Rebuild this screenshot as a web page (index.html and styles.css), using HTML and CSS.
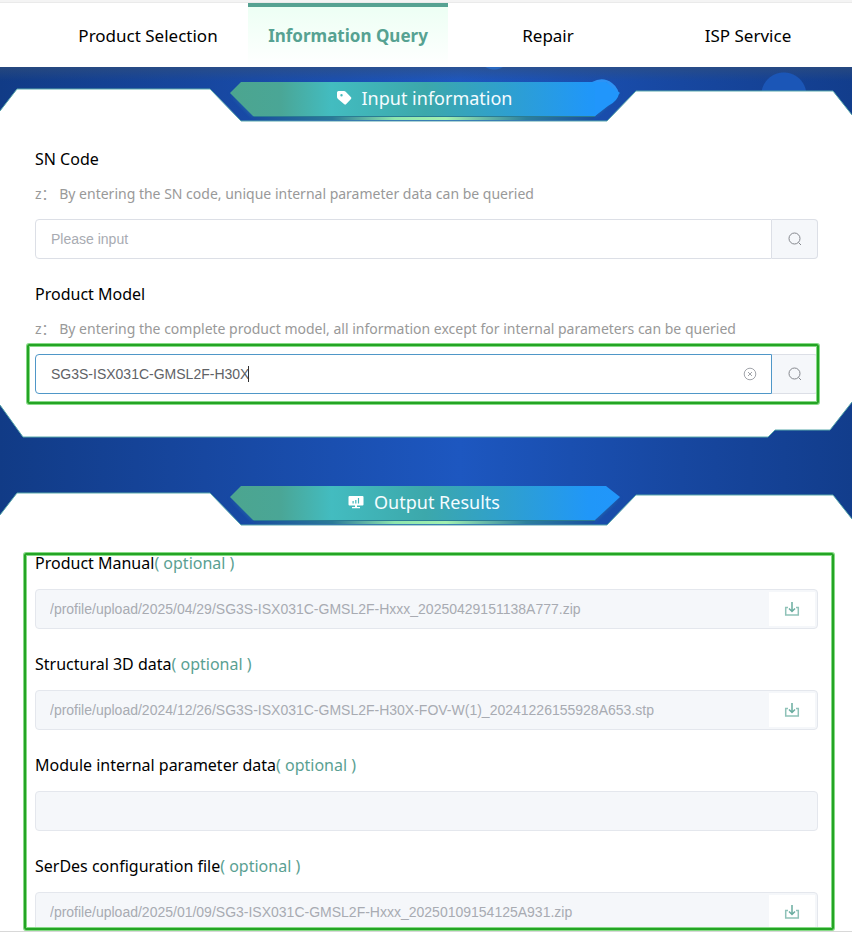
FILE: index.html
```
<!DOCTYPE html>
<html lang="en">
<head>
<meta charset="utf-8">
<meta name="viewport" content="width=device-width, initial-scale=1">
<title>Information Query</title>
<link rel="stylesheet" href="styles.css">
</head>
<body>
<div class="app">
  <nav class="tabs">
    <a class="tab" href="#">Product Selection</a>
    <a class="tab tab-active" href="#" aria-current="page">Information Query</a>
    <a class="tab" href="#">Repair</a>
    <a class="tab" href="#">ISP Service</a>
  </nav>

  <svg class="defs" aria-hidden="true">
    <defs>
      <linearGradient id="ribbon" x1="230" x2="620" y1="0" y2="0" gradientUnits="userSpaceOnUse">
        <stop offset="0" stop-color="#4ca58f"/>
        <stop offset="0.13" stop-color="#4aa696"/>
        <stop offset="0.26" stop-color="#43bcc0"/>
        <stop offset="0.5" stop-color="#3ca8ab"/>
        <stop offset="0.7" stop-color="#2fa0cd"/>
        <stop offset="0.92" stop-color="#2097f8"/>
        <stop offset="1" stop-color="#2196fb"/>
      </linearGradient>
      <linearGradient id="glow" x1="241" x2="607" y1="0" y2="0" gradientUnits="userSpaceOnUse">
        <stop offset="0" stop-color="#1747a0"/>
        <stop offset="0.25" stop-color="#2a7a98"/>
        <stop offset="0.42" stop-color="#8ee6ae"/>
        <stop offset="0.56" stop-color="#a2f0b0"/>
        <stop offset="0.78" stop-color="#2b7f9e"/>
        <stop offset="1" stop-color="#1747a0"/>
      </linearGradient>
      <filter id="soft" x="-5%" y="-20%" width="110%" height="150%"><feGaussianBlur stdDeviation="2"/></filter>
      <symbol id="cap" viewBox="0 0 852 40" preserveAspectRatio="none">
        <path fill="#fff" d="M0 29 17 7H210L241 39H607L636 9H833L852 33V40H0Z"/>
        <path fill="#2b83a8" opacity=".7" filter="url(#soft)" d="M230 11 253 34H595L620 11 607 18H241Z"/>
        <path fill="url(#glow)" d="M252 35H596L592 38H256Z"/>
        <path fill="none" stroke="#58a8ab" stroke-width="1" d="M0 29 17 7H210L241 39H607L636 9H833L852 33"/>
        <path fill="#2a7c93" d="M253 34H595V35H254Z"/>
        <path fill="url(#ribbon)" d="M230 11 241 0H606L620 11 595 34H253Z"/>
      </symbol>
      <symbol id="search" viewBox="0 0 14 14">
        <circle cx="6.500" cy="6.500" r="5.500" fill="none" stroke="#85888e"/>
        <path fill="none" stroke="#85888e" d="m10.500 10.500 2.500 2.500"/>
      </symbol>
      <symbol id="download" viewBox="0 0 16 16">
        <path fill="none" stroke="#8fc2b8" stroke-width="1.500" d="M4 6.500H1.700V14H14.300V6.500H12"/>
        <path fill="none" stroke="#6aada0" stroke-width="1.500" d="M8 1V10M5 7.500l3 3 3-3"/>
      </symbol>
    </defs>
  </svg>

  <main class="main">
    <section class="panel">
      <header class="cap">
        <svg class="cap-art" viewBox="0 0 852 40" preserveAspectRatio="none" aria-hidden="true">
          <use href="#cap" width="852" height="40"/>
          <path fill="#2d93f5" d="M592 0Q603-6 612 1Q620 7 618 15L606 0Z"/>
          <path fill="#2196fb" d="M595 0H606L619 11Q618 19 608 24L595 34Z"/>
        </svg>
        <h2 class="cap-title">
          <svg class="cap-icon" viewBox="0 0 16 16" aria-hidden="true"><path fill="#fff" fill-rule="evenodd" d="M2.500 1H8Q9 1 9.700 1.700L15 7.200Q15.800 8 15 8.900L10 14.300Q9.200 15 8.300 14.300L2 9Q1 8 1 7V2.500Q1 1 2.500 1ZM5.500 4A1.200 1.200 0 1 0 5.500 6.400 1.200 1.200 0 0 0 5.500 4Z"/></svg>
          Input information
        </h2>
      </header>
      <form class="panel-body">
        <div class="group">
          <label class="label" for="sn">SN Code</label>
          <p class="hint">z： By entering the SN code, unique internal parameter data can be queried</p>
          <div class="field">
            <input class="query" id="sn" type="text" placeholder="Please input">
            <button class="search" type="button" aria-label="Search"><svg class="icon-small"><use href="#search"/></svg></button>
          </div>
        </div>
        <div class="group">
          <label class="label" for="model">Product Model</label>
          <p class="hint">z： By entering the complete product model, all information except for internal parameters can be queried</p>
          <div class="field">
            <input class="query query-focus" id="model" type="text" value="SG3S-ISX031C-GMSL2F-H30X">
            <span class="caret"></span>
            <button class="clear" type="button" aria-label="Clear">
              <svg class="icon-small" viewBox="0 0 14 14"><g fill="none" stroke="#a2a5ab"><circle cx="7" cy="7" r="5.800"/><path d="m5 5 4 4m0-4-4 4"/></g></svg>
            </button>
            <button class="search" type="button" aria-label="Search"><svg class="icon-small"><use href="#search"/></svg></button>
            <span class="mark mark-field"></span>
          </div>
        </div>
      </form>
      <svg class="foot" viewBox="0 0 852 36" preserveAspectRatio="none" aria-hidden="true">
        <path fill="#fff" d="M0 0H852L830 28H775L768 35H23L0 3Z"/>
        <path fill="none" stroke="#58a8ab" d="M852 0 830 28H775L768 35H23L0 3"/>
      </svg>
    </section>

    <section class="panel panel-output">
      <header class="cap">
        <svg class="cap-art" aria-hidden="true"><use href="#cap"/></svg>
        <h2 class="cap-title">
          <svg class="cap-icon" viewBox="0 0 16 16" aria-hidden="true"><path fill="#fff" fill-rule="evenodd" d="M1.500 2H14.500Q15.500 2 15.500 3V10.500Q15.500 11.500 14.500 11.500H9V13H12V14.200H4V13H7V11.500H1.500Q.5 11.500 .5 10.500V3Q.5 2 1.500 2ZM4.500 7V9.500H5.700V7ZM7.200 6V9.500H8.400V6ZM9.900 4V9.500H11.100V4Z"/></svg>
          Output Results
        </h2>
      </header>
      <div class="panel-body results">
        <div class="group">
          <label class="label" for="manual">Product Manual<span class="optional">( optional )</span></label>
          <div class="file">
            <input class="path" id="manual" type="text" disabled value="/profile/upload/2025/04/29/SG3S-ISX031C-GMSL2F-Hxxx_20250429151138A777.zip">
            <button class="download" type="button" aria-label="Download"><svg class="icon"><use href="#download"/></svg></button>
          </div>
        </div>
        <div class="group">
          <label class="label" for="structure">Structural 3D data<span class="optional">( optional )</span></label>
          <div class="file">
            <input class="path" id="structure" type="text" disabled value="/profile/upload/2024/12/26/SG3S-ISX031C-GMSL2F-H30X-FOV-W(1)_20241226155928A653.stp">
            <button class="download" type="button" aria-label="Download"><svg class="icon"><use href="#download"/></svg></button>
          </div>
        </div>
        <div class="group">
          <label class="label" for="module">Module internal parameter data<span class="optional">( optional )</span></label>
          <div class="file">
            <input class="path" id="module" type="text" disabled>
          </div>
        </div>
        <div class="group">
          <label class="label" for="serdes">SerDes configuration file<span class="optional">( optional )</span></label>
          <div class="file">
            <input class="path" id="serdes" type="text" disabled value="/profile/upload/2025/01/09/SG3-ISX031C-GMSL2F-Hxxx_20250109154125A931.zip">
            <button class="download" type="button" aria-label="Download"><svg class="icon"><use href="#download"/></svg></button>
          </div>
        </div>
        <span class="mark mark-results"></span>
      </div>
    </section>
  </main>
</div>
</body>
</html>
```
FILE: styles.css
```
* {
  box-sizing: border-box;
}

body {
  margin: 0;
  background: #fff;
  color: #000;
  font-family: "Noto Sans", "Noto Sans CJK SC", sans-serif;
}

h2,
p {
  margin: 0;
}

button,
input {
  font: inherit;
  min-width: 0;
}

button {
  display: flex;
  align-items: center;
  justify-content: center;
  padding: 0;
  border: 0;
}

.app {
  display: flex;
  flex-direction: column;
  height: 100vh;
  overflow: hidden;
  border-top: 2px solid #f4f4f4;
  border-bottom: 1px solid #d8d8d8;
}

.defs {
  position: absolute;
  width: 0;
  height: 0;
}

/* Tabs */
.tabs {
  display: grid;
  grid-template-columns: repeat(4, 1fr);
  flex: none;
  padding: 0 4px 0 48px;
  border-top: 1px solid #eaeaea;
}

.tab {
  display: flex;
  align-items: center;
  justify-content: center;
  height: 64px;
  padding-bottom: 4px;
  border-top: 4px solid transparent;
  color: #000;
  font-size: 17px;
  text-decoration: none;
}

.tab-active {
  border-top-color: #56a292;
  background: linear-gradient(#edfff4, #fff);
  color: #56a292;
  font-weight: 700;
}

/* Panels */
.main {
  display: flex;
  flex-direction: column;
  flex: 1;
  gap: 48px;
  min-height: 0;
  padding-top: 15px;
  background:
    radial-gradient(circle at 92% 28px, #1b56b7 22px, transparent 23px),
    radial-gradient(circle at 58% -14px, #2a69c0 16px, transparent 17px),
    linear-gradient(rgba(52, 80, 120, 0.6), transparent 14px),
    linear-gradient(90deg, #113b86, #1747a0 24%, #1d57c0 54%, #1747a0 80%, #123d8c);
}

.panel {
  display: flex;
  flex-direction: column;
  flex: none;
}

.panel-output {
  flex: 1;
  min-height: 0;
}

.cap {
  display: grid;
  flex: none;
  height: 40px;
}

.cap-art,
.cap-title {
  grid-area: 1 / 1;
}

.cap-art {
  width: 100%;
  height: 40px;
  overflow: visible;
}

.cap-title {
  z-index: 1;
  display: flex;
  align-items: center;
  justify-content: center;
  gap: 10px;
  height: 32px;
  padding-right: 4px;
  color: #f4fcff;
  font-size: 18px;
  font-weight: 400;
}

.cap-icon,
.icon {
  width: 16px;
  height: 16px;
}

.icon-small {
  width: 14px;
  height: 14px;
}

.panel-body {
  display: flex;
  flex-direction: column;
  gap: 23px;
  padding: 25px 34px 8px 35px;
  background: #fff;
}

.foot {
  display: block;
  width: 100%;
  height: 36px;
}

.group {
  display: flex;
  flex-direction: column;
  flex: none;
}

.label {
  font-size: 16px;
  line-height: 24px;
}

.optional {
  color: #5a9f92;
}

.hint {
  margin-top: 11px;
  color: #999;
  font-size: 14px;
  line-height: 24px;
}

/* Search fields */
.field {
  position: relative;
  display: flex;
  height: 40px;
  margin-top: 13px;
}

.query {
  flex: 1;
  padding: 0 15px;
  border: 1px solid #dcdfe6;
  border-radius: 4px 0 0 4px;
  background: #fff;
  color: #606266;
  font-family: "Liberation Sans", sans-serif;
  font-size: 14px;
  outline: none;
}

.query::placeholder {
  color: #a8abb2;
}

.query-focus {
  border-color: #4f97c8;
}

.search {
  width: 46px;
  border: 1px solid #dcdfe6;
  border-left: 0;
  border-radius: 0 4px 4px 0;
  background: #f5f7fa;
}

.caret {
  position: absolute;
  top: 12px;
  left: 213px;
  width: 1px;
  height: 16px;
  background: #303133;
}

.clear {
  position: absolute;
  top: 13px;
  right: 61px;
  background: none;
}

/* Download fields */
.file {
  display: flex;
  height: 40px;
  margin-top: 14px;
  padding: 2px;
  border: 1px solid #e4e7ed;
  border-radius: 4px;
  background: #f5f7fa;
}

.path {
  flex: 1;
  padding: 0 12px;
  border: 0;
  background: none;
  color: #a8abb2;
  font-family: "Liberation Sans", sans-serif;
  font-size: 14px;
}

.download {
  width: 46px;
  background: #fff;
}

/* Highlight frames */
.mark {
  position: absolute;
  border: 2px solid #24a424;
  border-radius: 2px;
  box-shadow: 0 0 0 1px #86da86, inset 0 0 0 1px #86da86;
  pointer-events: none;
}

.mark-field {
  inset: -10px -1px -10px -8px;
}

.results {
  position: relative;
  flex: 1;
  min-height: 0;
  overflow: hidden;
}

.mark-results {
  inset: 27px 18px 1px 24px;
}
```
